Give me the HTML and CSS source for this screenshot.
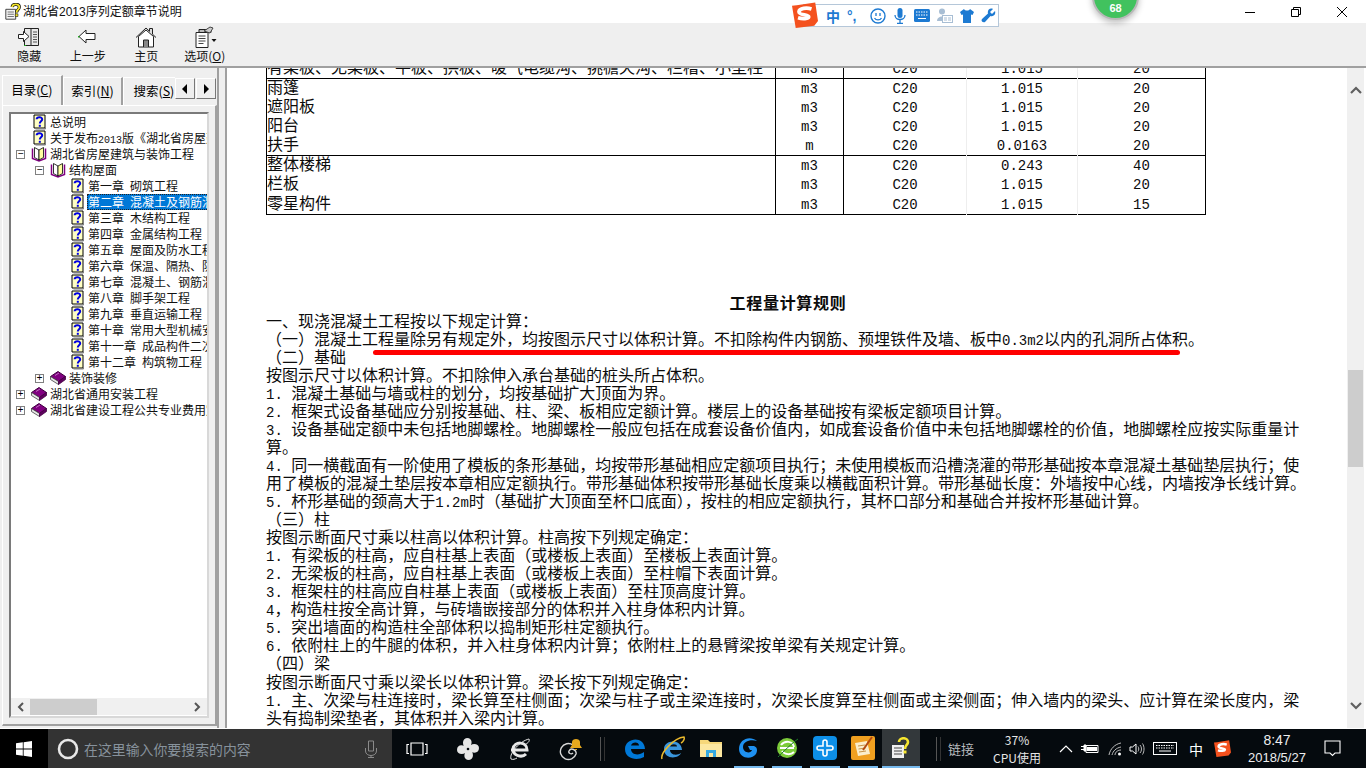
FILE: index.html
```html
<!DOCTYPE html>
<html lang="zh-CN">
<head>
<meta charset="utf-8">
<title>湖北省2013序列定额章节说明</title>
<link rel="stylesheet" href="styles.css">
</head>
<body>
<svg class="defs" aria-hidden="true">
  <symbol id="doc" viewBox="0 0 16 16">
    <path d="M3 1h11v13H3z" fill="#ffffc4" stroke="#000"/>
    <path d="M14.5 2v13H4.500" fill="none" stroke="#808080"/>
    <path d="M5.600 5.300C5.800 2.600 11.200 2.500 11.200 5.300 11.200 7.400 8.800 7.300 8.800 9.600" fill="none" stroke="#0000e0" stroke-width="2"/>
    <path d="M7.800 10.800h2v2h-2z" fill="#0000e0"/>
  </symbol>
  <symbol id="open" viewBox="0 0 16 16">
    <path d="M1.500 2.500v10l6.500 2.500 6.500-2.500v-10" fill="#fff" stroke="#800080" stroke-width="1.500"/>
    <path d="M3.500 1.500l4.500 2.500v10l-4.500-2.500z" fill="#fff" stroke="#000" stroke-width=".8"/>
    <path d="M12.500 1.500l-4.500 2.500v10l4.500-2.500z" fill="#ffffa0" stroke="#000" stroke-width=".8"/>
  </symbol>
  <symbol id="book" viewBox="0 0 16 16">
    <path d="M.500 6.500L8 1.500l7.500 5-7 5z" fill="#800080" stroke="#400040"/>
    <path d="M.500 6.500v3l8 5v-3z" fill="#e8e8e8" stroke="#404040" stroke-width=".8"/>
    <path d="M15.500 6.500v3l-7 5v-3z" fill="#600060" stroke="#400040" stroke-width=".8"/>
    <path d="M5 5.500l4-2.500" stroke="#c070c0"/>
  </symbol>
  <symbol id="logo" viewBox="0 0 28 28">
    <path d="M5 3.500l20-3 3 20-4 5-20 2.500-4-24z" fill="#f4511e"/>
    <path d="M21 7.500c-5-1.500-13-1-13.500 3-.4 4 11 2.500 10.500 5.500-.3 2-6.500 2.500-11.500 1" fill="none" stroke="#fff" stroke-width="4"/>
  </symbol>
</svg>
<div class="app">
  <header class="titlebar">
    <svg class="app-icon" viewBox="0 0 20 20" width="18" height="18"><path d="M2 7h11v11H2z" fill="#f4f4f4" stroke="#333"/><path d="M4 10h7M4 12.500h7M4 15h7" stroke="#666"/><path d="M9 4.500C9.500.5 17 .5 17 4.500c0 3-3 2.500-3 6" fill="none" stroke="#000" stroke-width="3.400"/><path d="M9 4.500C9.500.5 17 .5 17 4.500c0 3-3 2.500-3 6" fill="none" stroke="#f2e32a" stroke-width="2"/><path d="M12.500 12h3v3h-3z" fill="#f2e32a" stroke="#000" stroke-width=".6"/></svg>
    <span class="app-title">湖北省<span class="t-num">2013</span>序列定额章节说明</span>
    <div class="win-controls">
      <span class="win-btn"><svg viewBox="0 0 12 12" width="12" height="12"><path d="M1 6.500h10" stroke="#000"/></svg></span>
      <span class="win-btn"><svg viewBox="0 0 12 12" width="12" height="12"><path d="M1.500 3.500h7v7h-7zM3.500 3.500v-2h7v7h-2" fill="none" stroke="#000"/></svg></span>
      <span class="win-btn"><svg viewBox="0 0 12 12" width="12" height="12"><path d="M1 1l10 10M11 1L1 11" stroke="#000"/></svg></span>
    </div>
  </header>

  <nav class="toolbar">
    <div class="tool">
      <svg viewBox="0 0 24 24" width="24" height="24"><path d="M7.500 3.500h14v17h-14z" fill="#e8e8e8" stroke="#222"/><path d="M14 4v16" stroke="#222"/><path d="M16 7h4M16 9.500h4M16 12h4M16 14.500h4M16 17h4" stroke="#555"/><path d="M1.500 9.500h5v-3l5.500 5-5.500 5v-3h-5z" fill="#fff" stroke="#222"/><path d="M7 20.500h2" stroke="#2a2"/></svg>
      <span>隐藏</span>
    </div>
    <div class="tool">
      <svg viewBox="0 0 24 24" width="24" height="24"><path d="M3 11.500l7-6.500v3.500h9v6h-9v3.500z" fill="#fff" stroke="#222"/><path d="M2 11h1.500v1.500H2z" fill="#2a2"/></svg>
      <span>上一步</span>
    </div>
    <div class="tool">
      <svg viewBox="0 0 24 24" width="24" height="24"><path d="M2 12.500L12 3l3.500 3.300V3.500h3v5.700l3.500 3.300" fill="#ddd" stroke="#222"/><path d="M4.500 11.500v10.500h15V11.500L12 5z" fill="#fff" stroke="#222"/><path d="M9.500 22v-7h5v7" fill="#888" stroke="#222"/></svg>
      <span>主页</span>
    </div>
    <div class="tool">
      <svg viewBox="0 0 24 24" width="24" height="24"><path d="M3 7.500h12v15H3z" fill="#fff" stroke="#222"/><path d="M6 4.500h12v3H6z" fill="#bbb" stroke="#222"/><path d="M5.500 11h7M5.500 13.500h7M5.500 16h7M5.500 18.500h5" stroke="#444"/><path d="M11 6l6-4 3 1-3 5z" fill="#ccc" stroke="#444"/><path d="M18.500 14h5l-2.500 3z" fill="#111"/></svg>
      <span>选项(<u>O</u>)</span>
    </div>
  </nav>

  <main class="main">
    <aside class="side">
      <div class="tabs">
        <div class="tab tab-active">目录(<u>C</u>)</div>
        <div class="tab">索引(<u>N</u>)</div>
        <div class="tab tab-cut">搜索(<u>S</u>)</div>
        <div class="tab-arrow"><svg viewBox="0 0 8 10" width="8" height="10"><path d="M6 0v10L1 5z" fill="#000"/></svg></div>
        <div class="tab-arrow"><svg viewBox="0 0 8 10" width="8" height="10"><path d="M2 0v10l5-5z" fill="#000"/></svg></div>
      </div>
      <div class="sheet">
        <div class="tree-box">
          <div class="tree">
            <div class="row l0"><i class="exp none"></i><svg class="ico"><use href="#doc"/></svg><span class="lbl">总说明</span></div>
            <div class="row l0"><i class="exp none"></i><svg class="ico"><use href="#doc"/></svg><span class="lbl">关于发布<span class="n-s">2013</span>版《湖北省房屋建筑与装饰工程</span></div>
            <div class="row l0"><i class="exp">−</i><svg class="ico"><use href="#open"/></svg><span class="lbl">湖北省房屋建筑与装饰工程</span></div>
            <div class="row l1"><i class="exp">−</i><svg class="ico"><use href="#open"/></svg><span class="lbl">结构屋面</span></div>
            <div class="row l2"><i class="exp none"></i><svg class="ico"><use href="#doc"/></svg><span class="lbl">第一章&ensp;砌筑工程</span></div>
            <div class="row l2"><i class="exp none"></i><svg class="ico"><use href="#doc"/></svg><span class="lbl sel">第二章&ensp;混凝土及钢筋混凝土工程</span></div>
            <div class="row l2"><i class="exp none"></i><svg class="ico"><use href="#doc"/></svg><span class="lbl">第三章&ensp;木结构工程</span></div>
            <div class="row l2"><i class="exp none"></i><svg class="ico"><use href="#doc"/></svg><span class="lbl">第四章&ensp;金属结构工程</span></div>
            <div class="row l2"><i class="exp none"></i><svg class="ico"><use href="#doc"/></svg><span class="lbl">第五章&ensp;屋面及防水工程程</span></div>
            <div class="row l2"><i class="exp none"></i><svg class="ico"><use href="#doc"/></svg><span class="lbl">第六章&ensp;保温、隔热、防腐工程</span></div>
            <div class="row l2"><i class="exp none"></i><svg class="ico"><use href="#doc"/></svg><span class="lbl">第七章&ensp;混凝土、钢筋混凝土</span></div>
            <div class="row l2"><i class="exp none"></i><svg class="ico"><use href="#doc"/></svg><span class="lbl">第八章&ensp;脚手架工程</span></div>
            <div class="row l2"><i class="exp none"></i><svg class="ico"><use href="#doc"/></svg><span class="lbl">第九章&ensp;垂直运输工程</span></div>
            <div class="row l2"><i class="exp none"></i><svg class="ico"><use href="#doc"/></svg><span class="lbl">第十章&ensp;常用大型机械安拆</span></div>
            <div class="row l2"><i class="exp none"></i><svg class="ico"><use href="#doc"/></svg><span class="lbl">第十一章&ensp;成品构件二次运输</span></div>
            <div class="row l2"><i class="exp none"></i><svg class="ico"><use href="#doc"/></svg><span class="lbl">第十二章&ensp;构筑物工程</span></div>
            <div class="row l1"><i class="exp">+</i><svg class="ico"><use href="#book"/></svg><span class="lbl">装饰装修</span></div>
            <div class="row l0"><i class="exp">+</i><svg class="ico"><use href="#book"/></svg><span class="lbl">湖北省通用安装工程</span></div>
            <div class="row l0"><i class="exp">+</i><svg class="ico"><use href="#book"/></svg><span class="lbl">湖北省建设工程公共专业费用定额</span></div>
          </div>
          <div class="hscroll">
            <svg viewBox="0 0 8 10" width="8" height="10"><path d="M6 1L2 5l4 4" fill="none" stroke="#555" stroke-width="2"/></svg>
            <div class="hthumb"></div>
            <svg viewBox="0 0 8 10" width="8" height="10"><path d="M2 1l4 4-4 4" fill="none" stroke="#555" stroke-width="2"/></svg>
          </div>
        </div>
      </div>
    </aside>
    <div class="splitter"></div>
    <section class="doc">
      <div class="doc-inner">
        <table class="rates">
          <colgroup><col class="c1"><col class="c2"><col class="c3"><col class="c4"><col class="c5"></colgroup>
          <tbody>
            <tr><td>有梁板、无梁板、平板、拱板、暖气电缆沟、挑檐天沟、栏槽、小型柱</td><td>m3</td><td>C20</td><td>1.015</td><td>20</td></tr>
          </tbody>
          <tbody>
            <tr><td>雨篷</td><td>m3</td><td>C20</td><td>1.015</td><td>20</td></tr>
            <tr><td>遮阳板</td><td>m3</td><td>C20</td><td>1.015</td><td>20</td></tr>
            <tr><td>阳台</td><td>m3</td><td>C20</td><td>1.015</td><td>20</td></tr>
            <tr><td>扶手</td><td>m</td><td>C20</td><td>0.0163</td><td>20</td></tr>
          </tbody>
          <tbody>
            <tr><td>整体楼梯</td><td>m3</td><td>C20</td><td>0.243</td><td>40</td></tr>
            <tr><td>栏板</td><td>m3</td><td>C20</td><td>1.015</td><td>20</td></tr>
            <tr><td>零星构件</td><td>m3</td><td>C20</td><td>1.015</td><td>15</td></tr>
          </tbody>
        </table>
        <h1 class="rule-title">工程量计算规则</h1>
        <div class="ln">一、现浇混凝土工程按以下规定计算：</div>
        <div class="ln">（一）混凝土工程量除另有规定外，均按图示尺寸以体积计算。不扣除构件内钢筋、预埋铁件及墙、板中<span class="n">0.3m2</span>以内的孔洞所占体积。</div>
        <div class="ln">（二）基础</div>
        <div class="ln">按图示尺寸以体积计算。不扣除伸入承台基础的桩头所占体积。</div>
        <div class="ln"><span class="n">1. </span>混凝土基础与墙或柱的划分，均按基础扩大顶面为界。</div>
        <div class="ln"><span class="n">2. </span>框架式设备基础应分别按基础、柱、梁、板相应定额计算。楼层上的设备基础按有梁板定额项目计算。</div>
        <div class="ln"><span class="n">3. </span>设备基础定额中未包括地脚螺栓。地脚螺栓一般应包括在成套设备价值内，如成套设备价值中未包括地脚螺栓的价值，地脚螺栓应按实际重量计</div>
        <div class="ln">算。</div>
        <div class="ln"><span class="n">4. </span>同一横截面有一阶使用了模板的条形基础，均按带形基础相应定额项目执行；未使用模板而沿槽浇灌的带形基础按本章混凝土基础垫层执行；使</div>
        <div class="ln">用了模板的混凝土垫层按本章相应定额执行。带形基础体积按带形基础长度乘以横截面积计算。带形基础长度：外墙按中心线，内墙按净长线计算。</div>
        <div class="ln"><span class="n">5. </span>杯形基础的颈高大于<span class="n">1.2m</span>时（基础扩大顶面至杯口底面），按柱的相应定额执行，其杯口部分和基础合并按杯形基础计算。</div>
        <div class="ln">（三）柱</div>
        <div class="ln">按图示断面尺寸乘以柱高以体积计算。柱高按下列规定确定：</div>
        <div class="ln"><span class="n">1. </span>有梁板的柱高，应自柱基上表面（或楼板上表面）至楼板上表面计算。</div>
        <div class="ln"><span class="n">2. </span>无梁板的柱高，应自柱基上表面（或楼板上表面）至柱帽下表面计算。</div>
        <div class="ln"><span class="n">3. </span>框架柱的柱高应自柱基上表面（或楼板上表面）至柱顶高度计算。</div>
        <div class="ln"><span class="n">4</span>，构造柱按全高计算，与砖墙嵌接部分的体积并入柱身体积内计算。</div>
        <div class="ln"><span class="n">5. </span>突出墙面的构造柱全部体积以捣制矩形柱定额执行。</div>
        <div class="ln"><span class="n">6. </span>依附柱上的牛腿的体积，并入柱身体积内计算；依附柱上的悬臂梁按单梁有关规定计算。</div>
        <div class="ln">（四）梁</div>
        <div class="ln">按图示断面尺寸乘以梁长以体积计算。梁长按下列规定确定：</div>
        <div class="ln"><span class="n">1. </span>主、次梁与柱连接时，梁长算至柱侧面；次梁与柱子或主梁连接时，次梁长度算至柱侧面或主梁侧面；伸入墙内的梁头、应计算在梁长度内，梁</div>
        <div class="ln">头有捣制梁垫者，其体积并入梁内计算。</div>
      </div>
      <div class="vscroll">
        <svg viewBox="0 0 12 8" width="12" height="8"><path d="M1 7l5-5 5 5" fill="none" stroke="#606060" stroke-width="2.200"/></svg>
        <div class="vtrack"><div class="vthumb"></div></div>
        <svg viewBox="0 0 12 8" width="12" height="8"><path d="M1 1l5 5 5-5" fill="none" stroke="#606060" stroke-width="2.200"/></svg>
      </div>
    </section>
  </main>

  <footer class="taskbar">
    <div class="start"><svg viewBox="0 0 16 16" width="16" height="16"><path d="M0 2.300l6.800-1v6.300H0zM7.600 1.200L16 0v7.600H7.600zM0 8.400h6.800v6.300l-6.800-1zM7.600 8.400H16V16l-8.400-1.200z" fill="#fff"/></svg></div>
    <div class="search">
      <svg viewBox="0 0 22 22" width="22" height="22"><circle cx="11" cy="11" r="9" fill="none" stroke="#e8e8e8" stroke-width="2.600"/></svg>
      <span class="search-text">在这里输入你要搜索的内容</span>
      <svg class="mic" viewBox="0 0 14 18" width="14" height="18"><path d="M4.500 1h5v10h-5zM1.500 8v3c0 6 11 6 11 0V8M7 15v2M4 17.500h6" fill="none" stroke="#8a8a8a"/></svg>
    </div>
    <div class="pin pin-task"><svg viewBox="0 0 22 14" width="22" height="14"><path d="M5 1h12v12H5zM3 2.500H1v9h2M19 2.500h2v9h-2" fill="none" stroke="#fff" stroke-width="1.200"/></svg></div>
    <div class="pin pin-wide"><svg viewBox="0 0 24 24" width="24" height="24"><path d="M12 12C5 10 6 1 11 1c6 0 6 7 1 11zM12 12c2-7 11-6 11-1 0 6-7 6-11 1zM12 12c7 2 6 11 1 11-6 0-6-7-1-11zM12 12c-2 7-11 6-11 1 0-6 7-6 11-1z" fill="#e6e6e6"/><circle cx="12" cy="12" r="1.300" fill="#050a0e"/></svg></div>
    <div class="pin pin-wide"><svg viewBox="0 0 24 24" width="24" height="24"><path d="M3 13h16c0-9-13-9-14-1 0 7 9 9 13 5" fill="none" stroke="#e8e8e8" stroke-width="3"/><path d="M3 22C1 16 12 4 21 2c1 2-1 4-3 5M3 22c2 1 4 0 6-1" fill="none" stroke="#e8e8e8"/></svg></div>
    <div class="pin pin-wide"><svg viewBox="0 0 28 24" width="28" height="24"><path d="M15 8a8 8 0 1 0 3 9c1-4-5-7-7-3-1 2 2 4 4 2" fill="none" stroke="#d8d8d8" stroke-width="1.400"/><path d="M12 11h12l-2-3V5c0-4-8-4-8 0v3z" fill="#e6a81e"/><path d="M17 12h2v1h-2z" fill="#e6a81e"/></svg></div>
    <div class="tb-sep"></div>
    <div class="app-ic"><svg viewBox="0 0 24 24" width="24" height="24"><path d="M2 13C2 2 21-1 22 13H8c0 6 8 7 13 3v5c-7 4-19 2-19-8zM8 9.500h8c0-4-7-4-8 0z" fill="#0078d7"/></svg></div>
    <div class="app-ic"><svg viewBox="0 0 26 26" width="26" height="26"><path d="M4 14C4 5 21 3 22 15H10c0 5 7 6 11 3-2 6-17 7-17-4z" fill="#3a96dd"/><path d="M10 11.500h7c0-3-6-3-7 0z" fill="#0a1014"/><path d="M2 24C0 18 14 3 24 2c1 2-1 5-3 6" fill="none" stroke="#eab92d" stroke-width="1.500"/></svg></div>
    <div class="app-ic"><svg viewBox="0 0 24 24" width="24" height="24"><path d="M1 4h8l2 2h12v15H1z" fill="#f6d77a"/><path d="M1 8h22v13H1z" fill="#fce7a0"/><path d="M7 21v-7h10v7z" fill="#36a9e1"/><path d="M10 21v-4h4v4z" fill="#fce7a0"/></svg></div>
    <div class="app-ic on"><svg viewBox="0 0 24 24" width="24" height="24"><path d="M20 5C13-1 2 3 2 13c0 10 13 11 17 5 2-4 1-7-2-8h-6l2 4h2c-1 4-9 3-9-3 0-6 8-8 14-6z" fill="#1e90f0"/></svg></div>
    <div class="app-ic on"><svg viewBox="0 0 24 24" width="24" height="24"><circle cx="12" cy="12" r="10" fill="#7ccb3a"/><path d="M5 12h14M6 9c4-5 12-4 13 2M7 15c3 4 9 4 12 1" fill="none" stroke="#fff" stroke-width="2"/><path d="M3 21C6 18 18 6 23 3" fill="none" stroke="#1c7a2a"/></svg></div>
    <div class="app-ic on"><svg viewBox="0 0 24 24" width="24" height="24"><rect width="24" height="24" rx="4" fill="#0d8fe8"/><path d="M10 6a2 2 0 0 1 4 0v4h4a2 2 0 0 1 0 4h-4v4a2 2 0 0 1-4 0v-4H6a2 2 0 0 1 0-4h4z" fill="none" stroke="#fff" stroke-width="1.600"/></svg></div>
    <div class="app-ic on"><svg viewBox="0 0 24 24" width="24" height="24"><rect width="24" height="24" rx="2" fill="#f0a020"/><path d="M4 7l12-2 3 13-12 2z" fill="#fbeecb"/><path d="M7 10l7-1M7.500 13l7-1M8 16l7-1" stroke="#c8954a"/><path d="M12 14l9-13" stroke="#b34a10" stroke-width="2"/></svg></div>
    <div class="app-ic active"><svg viewBox="0 0 22 22" width="22" height="22"><path d="M2 8h12v13H2z" fill="#f0f0f0"/><path d="M4 11h8M4 14h8M4 17h8" stroke="#444"/><path d="M9 5c0-5 9-5 9 0 0 3-3 3-3 7" fill="none" stroke="#f7e62e" stroke-width="2.600"/><path d="M13.500 13.500h3v3h-3z" fill="#f7e62e"/></svg></div>
    <div class="tb-sep tray-sep"></div>
    <div class="tray-link">链接</div>
    <div class="tray-cpu"><span>37%</span><span>CPU使用</span></div>
    <div class="tray w24"><svg viewBox="0 0 14 8" width="14" height="8"><path d="M1 7l6-6 6 6" fill="none" stroke="#fff" stroke-width="1.200"/></svg></div>
    <div class="tray w24"><svg viewBox="0 0 18 12" width="18" height="12"><path d="M5 2.500h12v7H5z" fill="none" stroke="#fff"/><path d="M6 4h10v4H6z" fill="#fff"/><path d="M0 3.500h3M0 6.500h3M3 2h2v6H3z" stroke="#fff" fill="#fff"/></svg></div>
    <div class="tray w26"><svg viewBox="0 0 14 14" width="14" height="14"><path d="M1 13C2 7 7 2 13 1M4 13c1-4 4-7 9-8M7 13c0-3 3-5 6-5" fill="none" stroke="#bbb"/><circle cx="11.500" cy="12" r="1.500" fill="#fff"/></svg></div>
    <div class="tray w18"><svg viewBox="0 0 16 14" width="16" height="14"><path d="M1 5h2.500L7 2v10L3.500 9H1z" fill="none" stroke="#fff"/><path d="M9 4.500c1 1.500 1 3.500 0 5M11 3c2 2 2 6 0 8M13.500 1.500c2 3 2 8 0 11" fill="none" stroke="#bbb"/></svg></div>
    <div class="tray w38"><svg viewBox="0 0 24 13" width="24" height="13"><rect x=".5" y=".5" width="23" height="12" fill="none" stroke="#fff"/><path d="M3 3.500h18M3 6h18" stroke="#fff" stroke-dasharray="1.500 1"/><path d="M6 9h12" stroke="#fff"/></svg></div>
    <div class="tray w24 tray-ime">中</div>
    <div class="tray w24 tray-s"><svg width="17" height="17"><use href="#logo"/></svg></div>
    <div class="clock"><span>8:47</span><span>2018/5/27</span></div>
    <div class="tray w38"><svg viewBox="0 0 18 17" width="18" height="17"><path d="M1 1h15v12h-5l-2.500 2.500L6 13H1z" fill="none" stroke="#fff" stroke-width="1.100"/></svg></div>
  </footer>

  <div class="mark"></div>
  <div class="score"><span>68</span></div>
  <div class="ime-bar">
    <svg class="ime-logo" width="26" height="28"><use href="#logo"/></svg>
    <span class="ime-zh">中</span>
    <span class="ime-dot">°,</span>
    <svg viewBox="0 0 16 16" width="16" height="16"><circle cx="8" cy="8" r="7" fill="none" stroke="#1d7ad2" stroke-width="1.400"/><path d="M6 5v3M10 5v3M4.500 10c1.500 2.500 5.500 2.500 7 0" fill="none" stroke="#1d7ad2" stroke-width="1.300"/></svg>
    <svg viewBox="0 0 14 16" width="14" height="16"><rect x="4.500" width="5" height="10" rx="2.500" fill="#1d7ad2"/><path d="M2 7c0 6 10 6 10 0M7 12v3M4 15.500h6" fill="none" stroke="#1d7ad2" stroke-width="1.300"/></svg>
    <svg viewBox="0 0 16 13" width="16" height="13"><rect width="16" height="13" rx="1.500" fill="#1d7ad2"/><path d="M2 3h12M2 6h12" stroke="#fff" stroke-dasharray="1.500 1"/><path d="M4 9.500h8" stroke="#fff"/></svg>
    <svg viewBox="0 0 16 15" width="16" height="15"><circle cx="5" cy="3.500" r="3" fill="#a8bed4"/><path d="M0 13c0-6 10-6 10 0z" fill="#a8bed4"/><rect x="5.500" y="7.500" width="10" height="7" fill="#fff" stroke="#a8bed4"/><path d="M7 10h3M11 10h3M7 12h3M11 12h3" stroke="#a8bed4"/></svg>
    <svg viewBox="0 0 14 14" width="14" height="14"><path d="M4 0L0 3l1.500 3L3 5.500V14h8V5.500l1.500.5L14 3l-4-3c-1 2-5 2-6 0z" fill="#1d7ad2"/></svg>
    <svg viewBox="0 0 15 15" width="15" height="15"><path d="M14 3l-3 3-2-2 3-3c-3-1.500-6 1-5 4.500L1 11c-1.500 2 1 4 3 3l5.500-6c3.500 1 5.500-2 4.500-5z" fill="#1d7ad2"/></svg>
  </div>
</div>
</body>
</html>
```

FILE: styles.css
```css
* { box-sizing: border-box; }
html, body { margin: 0; height: 768px; overflow: hidden; background: #fff; }
body { font-family: "Noto Sans CJK SC", "Liberation Sans", sans-serif; color: #000; }
.defs { width: 0; height: 0; position: absolute; }
.app { position: relative; width: 1366px; height: 768px; display: flex; flex-direction: column; overflow: hidden; }

/* title bar */
.titlebar { height: 23px; background: #fff; display: flex; align-items: center; padding-left: 4px; flex: none; }
.app-icon { flex: none; }
.app-title { margin-left: 1px; font-size: 12px; line-height: 21px; height: 23px; white-space: nowrap; color: #111; }
.t-num { font-family: "Liberation Sans", sans-serif; font-size: 12px; }
.win-controls { margin-left: auto; display: flex; padding-right: 1px; }
.win-btn { width: 46px; height: 23px; display: flex; align-items: center; justify-content: center; }

/* toolbar */
.toolbar { height: 45px; flex: none; background: #efefef; border-bottom: 2px solid #a0a0a0; display: flex; }
.tool { width: 58.500px; display: flex; flex-direction: column; align-items: center; padding-top: 2px; font-size: 12px; line-height: 16px; white-space: nowrap; color: #111; }
.tool svg { margin-bottom: -1px; }

/* main */
.main { flex: 1; min-height: 0; display: flex; background: #efefef; }
.side { width: 219px; flex: none; display: flex; flex-direction: column; border-right: 2px solid #a0a0a0; }
.tabs { height: 37px; flex: none; display: flex; align-items: flex-end; padding-left: 2px; position: relative; }
.tab { width: 61px; height: 28px; line-height: 26px; text-align: center; background: #efefef; border: 1px solid #c8c8c8; border-left-color: #fff; border-top-color: #fff; border-bottom: 0; border-right: 2px solid #a0a0a0; white-space: nowrap; font-size: 12.500px; }
.tab-active { height: 30px; line-height: 28px; }
.tab-cut { width: 52px; border-right: 0; overflow: hidden; text-align: left; padding-left: 9px; }
.tab-arrow { width: 20px; height: 21px; margin: 0 1px 6px 0; background: #efefef; border: 1px solid #fff; border-right-color: #777; border-bottom-color: #777; display: flex; align-items: center; justify-content: center; }
.sheet { flex: 1; min-height: 0; margin: 0 0 2px 2px; padding: 6px 6px 6px 6px; border: 1px solid #fff; border-right: 2px solid #a0a0a0; border-bottom: 2px solid #a0a0a0; }
.tree-box { height: 100%; background: #fff; border: 2px solid #7a7a7a; border-right-color: #d8d8d8; border-bottom-color: #d8d8d8; display: flex; flex-direction: column; overflow: hidden; }
.tree { flex: 1; min-height: 0; overflow: hidden; }
.row { height: 16px; display: flex; align-items: center; white-space: nowrap; font-size: 12px; line-height: 16px; }
.l0 { padding-left: 5px; }
.l1 { padding-left: 24px; }
.l2 { padding-left: 43px; }
.exp { flex: none; width: 9px; height: 9px; border: 1px solid #808080; font-style: normal; font-family: "Liberation Mono", monospace; font-size: 10px; line-height: 7px; text-align: center; overflow: hidden; }
.exp.none { border: 0; }
.ico { flex: none; width: 16px; height: 16px; margin-left: 6px; }
.lbl { margin-left: 2px; padding: 0 1px; height: 16px; line-height: 15px; color: #111; }
.n-s { font-family: "Liberation Mono", monospace; font-size: 10px; }
.sel { background: #0078d7; color: #fff; outline: 1px dotted #222; outline-offset: -1px; }
.hscroll { height: 17px; flex: none; background: #f0f0f0; display: flex; align-items: center; padding: 0 6px; margin-bottom: 1px; }
.hthumb { width: 67px; height: 16px; background: #cdcdcd; margin: 0 auto 0 5px; }
.splitter { width: 8px; flex: none; border-right: 2px solid #a0a0a0; }

/* document */
.doc { flex: 1; min-width: 0; display: flex; background: #fff; }
.doc-inner { width: 1120px; flex: none; padding-left: 39px; overflow: hidden; font-size: 16px; color: #0c0c0c; }
.rates { width: 939px; margin-top: -10px; border-collapse: collapse; table-layout: fixed; border: 1px solid #000; }
.rates td { height: 19.200px; line-height: 18px; padding: 1px 0 0; text-align: center; font-size: 14px; border-right: 1px solid #000; white-space: nowrap; font-family: "Liberation Mono", "Noto Sans CJK SC", monospace; overflow: hidden; }
.rates td:first-child { text-align: left; padding: 0 0 4px 0; line-height: 15px; font-size: 16px; font-family: "Noto Sans CJK SC", sans-serif; overflow: visible; }
.rates td:nth-child(3), .rates td:nth-child(4) { border-right-color: #eee; }
.rates tbody { border-top: 1px solid #000; }
.c1 { width: 509px; }
.c2 { width: 68px; }
.c3 { width: 123px; }
.c4 { width: 111px; }
.c5 { width: 128px; }
.rule-title { margin: 79px 0 0; width: 1044px; text-align: center; font-size: 16px; letter-spacing: .7px; line-height: 17px; font-weight: 700; }
.ln { height: 18.050px; line-height: 18px; white-space: nowrap; }
.n { font-family: "Liberation Mono", monospace; font-size: 14px; white-space: pre; }
.vscroll { width: 17px; flex: none; background: #f0f0f0; display: flex; flex-direction: column; align-items: center; padding: 18px 0 18px; }
.vtrack { flex: 1; width: 15px; margin: 4px 0; padding-top: 272px; }
.vthumb { width: 15px; height: 97px; background: #cdcdcd; }

/* overlays */
.mark { position: absolute; left: 373px; top: 350px; width: 807px; height: 5px; background: #f00; border-radius: 3px; }
.score { position: absolute; left: 1092px; top: -27px; width: 47px; height: 47px; border-radius: 50%; background: #41c25e; border: 2px solid #b8b8b8; box-shadow: 0 3px 6px rgba(0,0,0,.25); color: #fff; font: 700 11px/1 "Liberation Sans", sans-serif; display: flex; align-items: flex-end; justify-content: center; padding-bottom: 4px; }
.ime-bar { position: absolute; left: 803px; top: 4px; width: 196px; height: 23px; background: #fff; border: 1px solid #b5c7d9; display: flex; align-items: center; gap: 7px; padding-left: 22px; }
.ime-logo { position: absolute; left: -12px; top: -4px; }
.ime-zh { color: #1d7ad2; font-size: 14px; font-weight: 700; line-height: 16px; }
.ime-dot { color: #1d7ad2; font: 700 14px/14px "Liberation Sans", sans-serif; width: 16px; }

/* taskbar */
.taskbar { height: 40px; flex: none; background: #050a0e; display: flex; color: #e6e6e6; border-top: 1px solid #fff; }
.start { width: 48px; background: #000; display: flex; align-items: center; justify-content: center; }
.search { width: 344px; background: #333; display: flex; align-items: center; padding-left: 9px; }
.search-text { margin-left: 5px; font-size: 13.900px; color: #87929c; white-space: nowrap; }
.mic { margin-left: auto; margin-right: 14px; }
.pin { height: 39px; display: flex; align-items: center; justify-content: center; }
.pin-task { width: 50px; }
.pin-wide { width: 52px; }
.tb-sep { width: 18px; position: relative; }
.tb-sep::after { content: ""; position: absolute; left: 2px; top: 8px; height: 24px; width: 3px; border-left: 1px solid #555; border-right: 1px solid #333; }
.app-ic { width: 38px; height: 39px; display: flex; align-items: center; justify-content: center; border-bottom: 2px solid transparent; position: relative; }
.app-ic.on::after { content: ""; position: absolute; left: 4px; right: 4px; bottom: -2px; height: 2px; background: #76b9ed; }
.app-ic.active { background: #33383b; border-bottom-color: #76b9ed; }
.tray-sep { width: 28px; }
.tray-sep::after { left: 16px; }
.tray-link { width: 26px; font-size: 13px; line-height: 39px; color: #b8bcbf; white-space: nowrap; }
.tray-cpu { width: 66px; margin-left: 10px; display: flex; flex-direction: column; align-items: center; justify-content: center; font-size: 12px; line-height: 18px; white-space: nowrap; }
.tray { height: 39px; display: flex; align-items: center; justify-content: center; flex: none; }
.tray-cpu + .tray { margin-left: 4px; }
.w18 { width: 18px; }
.w24 { width: 24px; }
.w26 { width: 26px; }
.w38 { width: 38px; }
.tray-ime { font-size: 14px; color: #fff; }
.tray-s { margin-left: 2px; }
.clock { width: 74px; margin-left: 6px; display: flex; flex-direction: column; align-items: center; justify-content: center; font: 13px/18px "Liberation Sans", sans-serif; white-space: nowrap; color: #eee; }
.clock span:first-child { font-size: 14px; }
```
